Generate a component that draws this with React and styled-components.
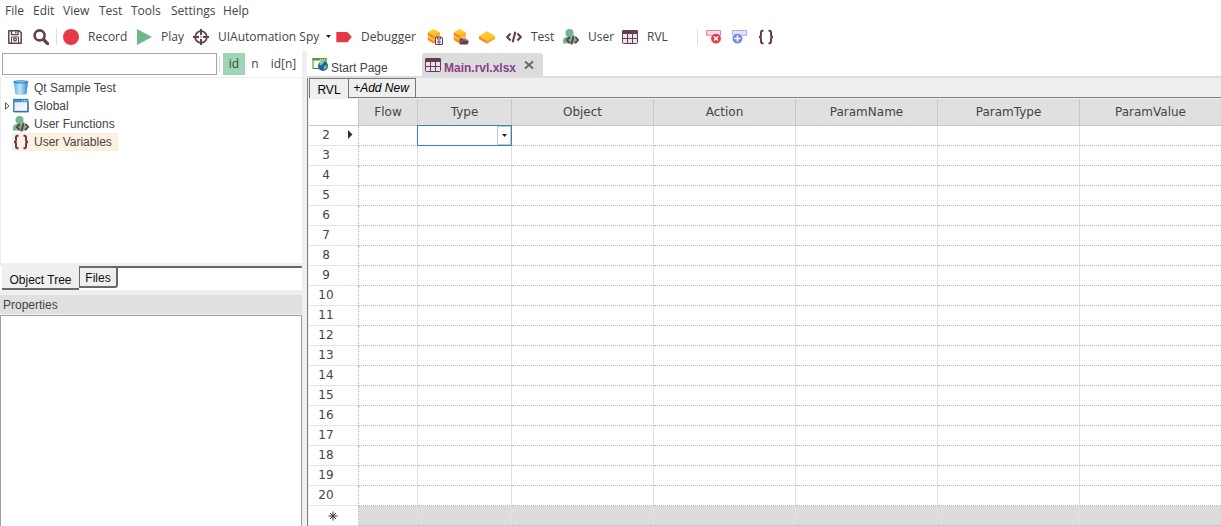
import React from "react";
import styled, { createGlobalStyle } from "styled-components";

const GlobalStyle = createGlobalStyle`
  * { box-sizing: border-box; }
  body { margin: 0; background: #fff; color: #444; font: 12px "Open Sans", "Noto Sans", sans-serif; overflow: hidden; }
  button, input, select { font: inherit; color: inherit; }
  button { padding: 0; border: 0; background: none; cursor: pointer; }
  svg { display: block; flex: none; }
`;

const ui = '"Liberation Sans", Arial, sans-serif';
const plum = "#633f4b";

const Page = styled.div`
  display: flex;
  flex-direction: column;
  min-height: 100vh;
`;

const MenuBar = styled.nav`
  display: flex;
  height: 22px;
  padding: 0 0 2px 5px;
`;

const MenuItem = styled.button`
  width: ${(p) => p.$width}px;
  text-align: left;
  white-space: nowrap;
`;

const ToolBar = styled.div`
  display: flex;
  align-items: center;
  height: 29px;
  padding-left: 7px;
`;

const ToolButton = styled.button`
  display: flex;
  flex: none;
  align-items: center;
  gap: 9px;
  width: ${(p) => p.$width}px;
  height: 24px;
  white-space: nowrap;
`;

const Divider = styled.span`
  flex: none;
  width: 1px;
  height: ${(p) => p.$height || 16}px;
  margin: ${(p) => p.$margin || "0"};
  background: #dcdcdc;
`;

const Workspace = styled.div`
  display: flex;
  flex: 1;
`;

const Sidebar = styled.aside`
  display: flex;
  flex: none;
  flex-direction: column;
  width: 302px;
  background: #fff;
  font-family: ${ui};
`;

const Splitter = styled.div`
  flex: none;
  width: 5px;
  background: #efefef;
`;

const SearchRow = styled.div`
  display: flex;
  align-items: center;
  height: 26px;
  padding-left: 2px;
  font-family: "Open Sans", "Noto Sans", sans-serif;
`;

const SearchBox = styled.input`
  width: 215px;
  height: 22px;
  padding: 0 4px;
  border: 1px solid #a5a5a5;
  background: #fff;
  outline: 0;
`;

const ModeButton = styled.button`
  width: ${(p) => p.$width}px;
  height: 22px;
  padding-bottom: 2px;
  background: ${(p) => (p.$active ? "#9fd5b7" : "none")};
`;

const Tree = styled.ul`
  height: 186px;
  margin: 0;
  padding: 1px 0 0 3px;
  border: solid #efefef;
  border-width: 1px 0 0 1px;
  list-style: none;
`;

const TreeRow = styled.li`
  display: flex;
  align-items: center;
  height: 18px;
`;

const Expander = styled.span`
  display: flex;
  width: 8px;
`;

const TreeLabel = styled.span`
  display: flex;
  align-items: center;
  gap: 5px;
  height: 18px;
  padding: 0 6px 0 1px;
  background: ${(p) => (p.$selected ? "#fff0e0" : "none")};
  outline: ${(p) => (p.$selected ? "1px solid #f1eeea" : "none")};
  outline-offset: -1px;
`;

const SideTabs = styled.div`
  display: flex;
  align-items: flex-start;
  height: 27px;
  padding-left: 2px;
  border-top: 3px solid #efefef;
`;

const SideTab = styled.button`
  height: ${(p) => (p.$active ? 24 : 22)}px;
  width: ${(p) => (p.$active ? 77 : 39)}px;
  padding-top: ${(p) => (p.$active ? 6 : 2)}px;
  background: #efefef;
  color: #111;
  border: solid #696969;
  border-width: ${(p) => (p.$active ? "0 0 2px" : "2px 2px 2px 1px")};
  border-radius: ${(p) => (p.$active ? "0" : "0 0 3px 0")};
`;

const SideTabRest = styled.span`
  flex: 1;
  height: 2px;
  background: #696969;
`;

const PanelTitle = styled.h2`
  height: 24px;
  margin: 0;
  padding-left: 3px;
  border-top: 5px solid #efefef;
  background: #e0e0e0;
  font-size: 12px;
  font-weight: 400;
  line-height: 20px;
`;

const PropertyBox = styled.div`
  flex: 1;
  border: 1px solid #a0a0a0;
  border-bottom: 0;
  outline: 1px solid #efefef;
  margin-top: 1px;
`;

const Editor = styled.main`
  flex: 1;
  min-width: 0;
  font-family: ${ui};
`;

const DocTabs = styled.div`
  display: flex;
  align-items: flex-end;
  height: 27px;
  border-bottom: 2px solid #dcdcdc;
`;

const DocTab = styled.div`
  display: flex;
  align-items: center;
  gap: 3px;
  width: ${(p) => (p.$active ? 121 : 115)}px;
  height: 23px;
  padding-left: ${(p) => (p.$active ? 3 : 5)}px;
  border-radius: 3px 3px 0 0;
  background: ${(p) => (p.$active ? "#dcdcdc" : "none")};
`;

const DocTabName = styled.button`
  padding-top: 6px;
  color: ${(p) => (p.$active ? "#8a3f8c" : "#444")};
  font-weight: ${(p) => (p.$active ? 700 : 400)};
  white-space: nowrap;
`;

const CloseButton = styled.button`
  width: 16px;
  height: 16px;
  margin-left: 2px;
  display: grid;
  place-items: center;
`;

const Sheet = styled.section`
  border-left: 1px solid #808080;
  background: #efefef;
`;

const SheetTabs = styled.div`
  display: flex;
  height: 20px;
  padding-left: 1px;
`;

const SheetTab = styled.button`
  width: ${(p) => (p.$active ? 39 : 68)}px;
  border: solid #777;
  border-width: ${(p) => (p.$active ? "1px 0 0 1px" : "1px")};
  padding: ${(p) => (p.$active ? "2px 0 0" : "0 2px 1px 0")};
  color: #000;
  font-style: ${(p) => (p.$active ? "normal" : "italic")};
  white-space: nowrap;
`;

const SheetTabsRest = styled.span`
  flex: 1;
  border-bottom: 1px solid #808080;
`;

const GridScroll = styled.div`
  padding: 1px 0 0 1px;
  overflow: hidden;
`;

const Grid = styled.table`
  width: 100%;
  min-width: 800px;
  table-layout: fixed;
  border-spacing: 0;
  background: #fff;
  font: 12px "DejaVu Sans", Verdana, sans-serif;
`;

const HeadCell = styled.th`
  width: ${(p) => (p.$width ? p.$width + "px" : "auto")};
  height: 27px;
  padding: 0;
  background: ${(p) => (p.$corner ? "#fff" : "#e0e0e0")};
  border: solid #c8c8c8;
  border-width: 0 1px 1px 0;
  font-weight: 400;
  &:last-child { border-right: 0; }
`;

const RowHead = styled.th`
  height: 20px;
  padding: 0;
  border-right: 1px dotted #b4b4b4;
  border-bottom: 1px solid #e4e4e4;
  font-weight: 400;
`;

const RowHeadContent = styled.div`
  display: flex;
  align-items: center;
  height: 19px;
  padding-bottom: ${(p) => (p.$last ? 0 : 2)}px;
  padding-left: ${(p) => (p.$last ? 19 : 0)}px;
`;

const RowNumber = styled.span`
  width: 34px;
  margin-right: 2px;
  text-align: center;
`;

const Cell = styled.td`
  height: 20px;
  padding: 0;
  border-right: 1px solid #e0e0e0;
  border-bottom: 1px dotted #b4b4b4;
  background: ${(p) => (p.$blank ? "#dcdcdc" : "none")};
  &:last-child { border-right: 0; }
`;

const EditFrame = styled.div`
  position: relative;
  height: 21px;
  margin: -1px;
  border: 1px solid #2f86c4;
`;

const TypeSelect = styled.select`
  display: block;
  width: 100%;
  height: 19px;
  border: 0;
  background: #fff;
  appearance: none;
  outline: 0;
`;

const DropMark = styled.span`
  position: absolute;
  top: 0;
  right: 0;
  bottom: 0;
  display: grid;
  place-items: center;
  width: 14px;
  border: 1px solid #c8c8c8;
  background: #fff;
  pointer-events: none;
`;

const Icon = ({ children, size = 16 }) => (
  <svg width={size} height={size} viewBox="0 0 16 16" aria-hidden="true">{children}</svg>
);

const SaveIcon = () => (
  <Icon>
    <path d="M1.8 1.8h10.4l2 2v10.4H1.8z" fill="none" stroke={plum} strokeWidth="1.5" strokeLinejoin="round" />
    <path d="M4.5 2v3.6h6.5V2M8.8 2.5v2" fill="none" stroke={plum} strokeWidth="1.3" />
    <path d="M4.5 14V8h7v6" fill="none" stroke={plum} strokeWidth="1" />
    <circle cx="8" cy="10.5" r="1.4" fill="none" stroke={plum} strokeWidth="1.3" />
  </Icon>
);
const SearchIcon = () => (
  <Icon>
    <circle cx="6.6" cy="6.4" r="5" fill="none" stroke={plum} strokeWidth="2.6" />
    <path d="M10.5 10.5l4.1 4.1" stroke={plum} strokeWidth="3.2" strokeLinecap="round" />
  </Icon>
);
const RecordIcon = () => <Icon><circle cx="8" cy="8" r="8" fill="#e63946" /></Icon>;
const PlayIcon = () => <Icon><path d="M1 0l15 8-15 8z" fill="#6db88d" /></Icon>;
const TargetIcon = () => (
  <Icon>
    <circle cx="8" cy="8" r="5.8" fill="none" stroke={plum} strokeWidth="1.8" />
    <path d="M8 0v6M8 10v6M0 8h6M10 8h6" stroke={plum} strokeWidth="2" />
    <circle cx="8" cy="8" r=".8" fill={plum} />
  </Icon>
);
const TagIcon = () => (
  <Icon><path d="M1 3h9.6q.8 0 1.3.6L15.8 8l-3.900 4.700q-.5.6-1.300.6H1q-.7 0-.7-.7V3.700Q.3 3 1 3z" fill="#e63946" /></Icon>
);
const Stack = () => (
  <>
    <path d="M.8 7.5v3.400l5.800 3.500 6-3.500V7.500l-6 2z" fill="#f48a2c" />
    <path d="M.8 6.700l5.800 3.400 6-3.400v1.800l-6 3.400L.8 8.500z" fill="#fdc52c" />
    <path d="M.8 3.300v3.200l5.800 3.200 6-3.200V3.300z" fill="#f48a2c" />
    <path d="M6.700 0l6 3.300-6 3.300L.8 3.300z" fill="#fdca28" />
    <path d="M6.700 6.600l6-3.300v3l-6 3.400z" fill="#fbb02c" />
  </>
);
const StackSaveIcon = () => (
  <Icon>
    <Stack />
    <path d="M8.500 8h6l1 1v6.500h-7z" fill="#f7eff0" stroke={plum} />
    <path d="M10.500 8v2h3V8" fill="none" stroke={plum} />
    <circle cx="12" cy="13" r="1.200" fill="none" stroke={plum} />
  </Icon>
);
const StackOpenIcon = () => (
  <Icon>
    <Stack />
    <path d="M6.600 15.500v-6h3.200l.8 1h4v1.200H16l-1.400 3.800z" fill={plum} />
    <path d="M7.500 14l1.400-2.700h6" fill="none" stroke="#a98d94" strokeWidth=".5" />
  </Icon>
);
const BrickIcon = () => (
  <Icon>
    <path d="M0 7l8 4.600v3.200L0 10z" fill="#f58a2d" />
    <path d="M16 7l-8 4.600v3.200L16 10z" fill="#f9a72b" />
    <path d="M8 2.200L16 7l-8 4.700L0 7z" fill="#fdca28" />
  </Icon>
);
const CodeIcon = () => (
  <Icon><path d="M4.600 4.500L1.200 8l3.400 3.500M11.400 4.500L14.800 8l-3.400 3.500M9.300 2.800L6.700 13.200" fill="none" stroke={plum} strokeWidth="2.100" /></Icon>
);
const UserCodeIcon = () => (
  <Icon>
    <circle cx="6.500" cy="4" r="4" fill="#6db88d" />
    <path d="M0 14.500V12q0-4 4.200-4.300h4.600Q12 8 13 11v3.500z" fill="#6db88d" />
    <path d="M6.800 7.800L3.900 11l2.900 3.200M12.200 7.800l2.900 3.200-2.900 3.200M10.700 6.500L8.400 15.500" fill="none" stroke={plum} strokeWidth="1.900" />
  </Icon>
);
const TableIcon = () => (
  <Icon>
    <rect x=".5" y="1.500" width="15" height="13" rx="1" fill="#ebe0f5" stroke={plum} />
    <path d="M0 5V2.500Q0 1 1.500 1h13Q16 1 16 2.500V5z" fill={plum} />
    <path d="M0 9.500h16M5.500 5v9.500M10.500 5v9.500" stroke={plum} />
  </Icon>
);
const RowBadgeIcon = ({ color, children, cx }) => (
  <Icon>
    <path d="M.5 1.500h14v4.800H.5z" fill="#e8e0f5" stroke={color} strokeOpacity=".6" />
    <circle cx={cx} cy="9.500" r="5.200" fill={color} stroke="#fff" strokeWidth=".6" />
    {children}
  </Icon>
);
const RowDeleteIcon = () => (
  <RowBadgeIcon color="#e63946" cx="10"><path d="M8 7.500l4 4M12 7.500l-4 4" stroke="#fff" strokeWidth="1.600" /></RowBadgeIcon>
);
const RowAddIcon = () => (
  <RowBadgeIcon color="#6f83e3" cx="5.500"><path d="M5.500 6.300v6.400M2.300 9.500h6.400" stroke="#fff" strokeWidth="1.600" /></RowBadgeIcon>
);
const BracesIcon = () => (
  <Icon>
    <path d="M5.500 1.800H4.600Q3 1.800 3 3.500V6q0 2-2 2 2 0 2 2v2.500q0 1.700 1.600 1.700h.9M10.500 1.800h.9q1.600 0 1.600 1.700V6q0 2 2 2-2 0-2 2v2.500q0 1.700-1.600 1.700h-.9" fill="none" stroke={plum} strokeWidth="2" />
  </Icon>
);
const BucketIcon = () => (
  <Icon>
    <defs>
      <linearGradient id="bucket"><stop stopColor="#5ab5f0" /><stop offset=".45" stopColor="#bfe6fc" /><stop offset="1" stopColor="#2f86cf" /></linearGradient>
    </defs>
    <path d="M1.500 12.500l2 2.300h8.700l3-2.500z" fill="#999" opacity=".5" />
    <path d="M.6 1h14.600l-1.600 11.900q-.2 1.300-1.400 1.300H3.600q-1.200 0-1.400-1.300z" fill="url(#bucket)" />
    <path d="M.6 1Q8-.3 15.200 1l-.3 2Q8 4.200.9 3z" fill="#3389c9" />
    <path d="M2 1.700Q8 .8 13.700 1.700 8 2.800 2 1.700z" fill="#a8dcf8" />
  </Icon>
);
const WindowIcon = () => (
  <Icon>
    <defs><linearGradient id="pane" x2="1" y2="1"><stop stopColor="#dbe4fa" /><stop offset="1" stopColor="#fff" /></linearGradient></defs>
    <path d="M1 14h14.500V4" fill="none" stroke="#999" />
    <rect x=".8" y="1.500" width="14" height="12" fill="url(#pane)" stroke="#2a73b8" strokeWidth="1.300" />
    <path d="M1 1.800h13.700v2.400H1z" fill="#3f93d4" />
    <path d="M9 2.800h1M11 2.800h1M13 2.800h1" stroke="#fff" />
  </Icon>
);
const StartIcon = () => (
  <Icon>
    <rect x="1" y="1.500" width="13" height="10" fill="#f6fcee" stroke="#48862c" />
    <path d="M.5 1h14v2.500H.5z" fill="#5a9c35" />
    <path d="M8 2.300h1M10 2.300h1M12 2.300h1" stroke="#e6f5d9" />
    <circle cx="11" cy="9" r="5" fill="#1d5db8" />
    <path d="M7 7q2-3 4.500-2.500l-.6 2.500-2.200 1.600zM11.500 9.500l3.500-1.500-.5 3-2 2z" fill="#80c850" />
    <path d="M8 6q2-2 4-1" stroke="#b8e3fa" fill="none" />
  </Icon>
);
const CloseIcon = () => (
  <svg width="10" height="10" viewBox="0 0 10 10" aria-hidden="true"><path d="M1 1.500l8 7M9 1.500l-8 7" stroke="#666" strokeWidth="1.800" /></svg>
);
const DownMark = () => (
  <svg width="5" height="3" viewBox="0 0 5 3" aria-hidden="true"><path d="M0 0h5L2.500 3z" fill="#222" /></svg>
);
const CurrentMark = () => (
  <svg width="8" height="9" viewBox="0 0 8 9" aria-hidden="true"><path d="M3 0l4.500 4.500L3 9z" fill="#333" /></svg>
);
const StarMark = () => (
  <svg width="10" height="10" viewBox="0 0 10 10" aria-hidden="true"><path d="M5 .5v9M.5 5h9M2 2l6 6M8 2L2 8" stroke="#333" /></svg>
);

const menus = [["File", 28], ["Edit", 30], ["View", 36], ["Test", 32], ["Tools", 40], ["Settings", 52], ["Help", 40]];

const tools = [
  { name: "Save", icon: SaveIcon, width: 26 },
  { name: "Find", icon: SearchIcon, width: 23 },
  { divider: "0 6px 0 0" },
  { label: "Record", icon: RecordIcon, width: 73 },
  { label: "Play", icon: PlayIcon, width: 57 },
  { label: "UIAutomation Spy", icon: TargetIcon, width: 133 },
  { name: "Choose spy", icon: DownMark, width: 10 },
  { label: "Debugger", icon: TagIcon, width: 91 },
  { name: "Save objects", icon: StackSaveIcon, width: 26 },
  { name: "Open objects", icon: StackOpenIcon, width: 26 },
  { name: "Objects", icon: BrickIcon, width: 27 },
  { label: "Test", icon: CodeIcon, width: 57 },
  { label: "User", icon: UserCodeIcon, width: 59 },
  { label: "RVL", icon: TableIcon, width: 75 },
  { divider: "0 8px 0 0" },
  { name: "Delete row", icon: RowDeleteIcon, width: 26 },
  { name: "Add row", icon: RowAddIcon, width: 26 },
  { name: "Variables", icon: BracesIcon, width: 26 },
];

const treeItems = [
  { label: "Qt Sample Test", icon: BucketIcon },
  { label: "Global", icon: WindowIcon, expandable: true },
  { label: "User Functions", icon: UserCodeIcon },
  { label: "User Variables", icon: BracesIcon, selected: true },
];

const columns = [["Flow", 59], ["Type", 94], ["Object", 142], ["Action", 142], ["ParamName", 142], ["ParamType", 142], ["ParamValue"]];
const rows = Array.from({ length: 19 }, (_, i) => i + 2);

export default function App() {
  return (
    <Page>
      <GlobalStyle />
      <MenuBar>
        {menus.map(([label, width]) => <MenuItem key={label} $width={width}>{label}</MenuItem>)}
      </MenuBar>
      <ToolBar role="toolbar">
        {tools.map((t, i) => t.divider
          ? <Divider key={i} $margin={t.divider} />
          : <ToolButton key={i} $width={t.width} aria-label={t.name}><t.icon />{t.label}</ToolButton>)}
      </ToolBar>
      <Workspace>
        <Sidebar>
          <SearchRow>
            <SearchBox aria-label="Filter objects" />
            <Divider $margin="0 3px 0 2px" $height={14} />
            <ModeButton $width={22} $active>id</ModeButton>
            <ModeButton $width={20}>n</ModeButton>
            <ModeButton $width={37}>id[n]</ModeButton>
          </SearchRow>
          <Tree>
            {treeItems.map((item) => (
              <TreeRow key={item.label}>
                <Expander>
                  {item.expandable && <svg width="6" height="8" viewBox="0 0 6 8" aria-hidden="true"><path d="M1.500 .8L5 4 1.500 7.200z" fill="#fff" stroke="#555" /></svg>}
                </Expander>
                <TreeLabel $selected={item.selected}><item.icon />{item.label}</TreeLabel>
              </TreeRow>
            ))}
          </Tree>
          <SideTabs>
            <SideTab $active>Object Tree</SideTab>
            <SideTab>Files</SideTab>
            <SideTabRest />
          </SideTabs>
          <PanelTitle>Properties</PanelTitle>
          <PropertyBox />
        </Sidebar>
        <Splitter />
        <Editor>
          <DocTabs>
            <DocTab><StartIcon /><DocTabName>Start Page</DocTabName></DocTab>
            <DocTab $active>
              <TableIcon /><DocTabName $active>Main.rvl.xlsx</DocTabName>
              <CloseButton aria-label="Close tab"><CloseIcon /></CloseButton>
            </DocTab>
          </DocTabs>
          <Sheet>
            <SheetTabs>
              <SheetTab $active>RVL</SheetTab>
              <SheetTab>+Add New</SheetTab>
              <SheetTabsRest />
            </SheetTabs>
            <GridScroll>
              <Grid>
                <thead>
                  <tr>
                    <HeadCell $width={50} $corner />
                    {columns.map(([label, width]) => <HeadCell key={label} $width={width}>{label}</HeadCell>)}
                  </tr>
                </thead>
                <tbody>
                  {rows.map((n) => (
                    <tr key={n}>
                      <RowHead scope="row">
                        <RowHeadContent><RowNumber>{n}</RowNumber>{n === 2 && <CurrentMark />}</RowHeadContent>
                      </RowHead>
                      {columns.map(([label]) => (
                        <Cell key={label}>
                          {n === 2 && label === "Type" && (
                            <EditFrame>
                              <TypeSelect aria-label="Type"><option /></TypeSelect>
                              <DropMark><DownMark /></DropMark>
                            </EditFrame>
                          )}
                        </Cell>
                      ))}
                    </tr>
                  ))}
                  <tr>
                    <RowHead scope="row"><RowHeadContent $last><StarMark /></RowHeadContent></RowHead>
                    {columns.map(([label]) => <Cell key={label} $blank />)}
                  </tr>
                </tbody>
              </Grid>
            </GridScroll>
          </Sheet>
        </Editor>
      </Workspace>
    </Page>
  );
}
